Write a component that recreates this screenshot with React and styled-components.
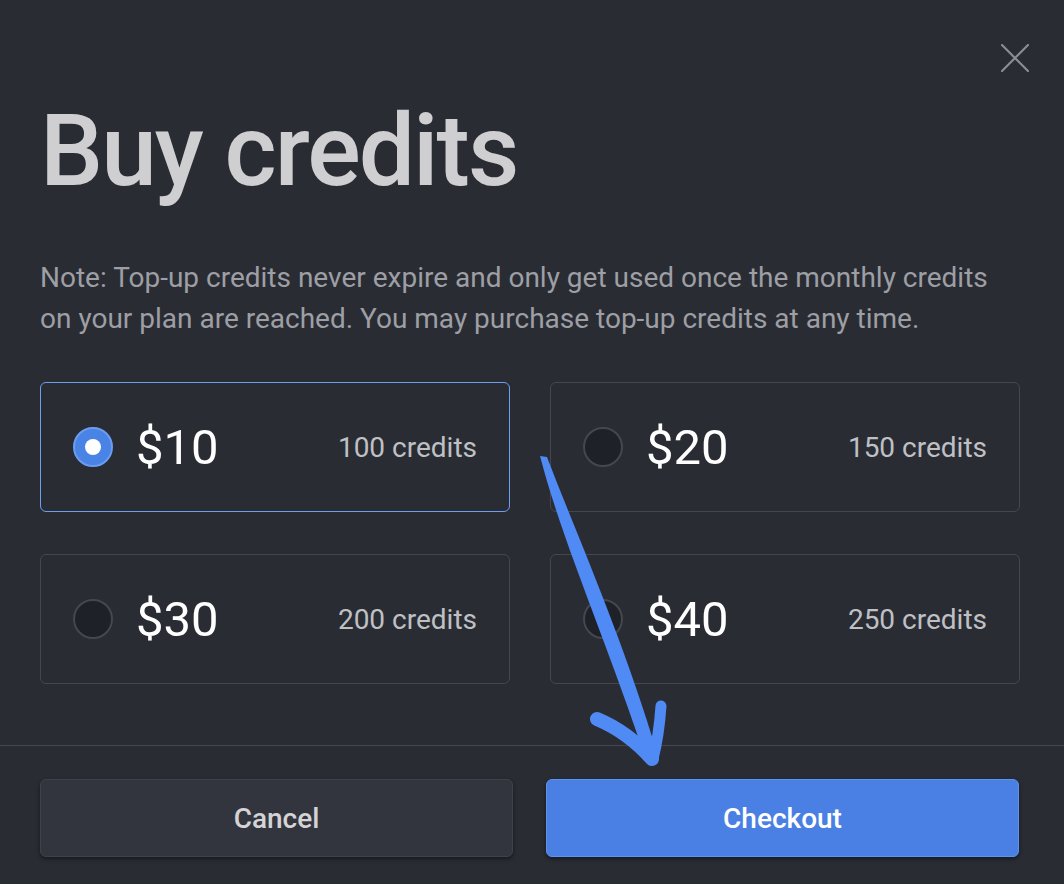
import React, { useState } from "react";
import styled, { createGlobalStyle } from "styled-components";

const GlobalStyle = createGlobalStyle`
  html, body {
    margin: 0;
    padding: 0;
    background: #2a2c34;
  }
  body {
    font-family: Roboto, "Liberation Sans", sans-serif;
  }
`;

const Dialog = styled.div`
  position: relative;
  width: 1064px;
  height: 884px;
  display: flex;
  flex-direction: column;
  background: #2a2c34;
  overflow: hidden;
`;

const CloseButton = styled.button`
  position: absolute;
  top: 44px;
  right: 35px;
  width: 28px;
  height: 28px;
  padding: 0;
  border: none;
  background: none;
  cursor: pointer;
  color: #8b8d92;
`;

const Body = styled.div`
  flex: 1;
  padding: 101px 44px 0 40px;
`;

const Title = styled.h1`
  margin: 0;
  font-size: 100px;
  line-height: 100px;
  font-weight: 500;
  letter-spacing: -2px;
  color: #cfcfd2;
`;

const Note = styled.p`
  max-width: 960px;
  margin: 56px 0 0;
  font-size: 28px;
  line-height: 41px;
  color: #9d9fa4;
`;

const Options = styled.div`
  display: grid;
  grid-template-columns: 1fr 1fr;
  column-gap: 40px;
  row-gap: 42px;
  margin-top: 43px;
`;

const Option = styled.label`
  display: flex;
  align-items: center;
  height: 130px;
  box-sizing: border-box;
  padding: 0 32px 0 32px;
  border: 1px solid ${({ $active }) => ($active ? "#6d9ef0" : "#45474e")};
  border-radius: 6px;
  cursor: pointer;
`;

const Radio = styled.span`
  width: 40px;
  height: 40px;
  box-sizing: border-box;
  border-radius: 50%;
  flex-shrink: 0;
  display: flex;
  align-items: center;
  justify-content: center;
  background: ${({ $checked }) => ($checked ? "#4a83e6" : "#1f2129")};
  border: 2px solid ${({ $checked }) => ($checked ? "#6a9df0" : "#45474e")};

  &::after {
    content: "";
    display: ${({ $checked }) => ($checked ? "block" : "none")};
    width: 16px;
    height: 16px;
    border-radius: 50%;
    background: #ffffff;
  }
`;

const Price = styled.span`
  margin-left: 23px;
  font-size: 49px;
  color: #ffffff;
`;

const Credits = styled.span`
  margin-left: auto;
  font-size: 28px;
  color: #bfc0c4;
`;

const Footer = styled.div`
  border-top: 1px solid #44464d;
  padding: 33px 45px 27px 40px;
  display: grid;
  grid-template-columns: 1fr 1fr;
  gap: 33px;
`;

const Button = styled.button`
  height: 78px;
  border-radius: 6px;
  font-family: Roboto, "Liberation Sans", sans-serif;
  font-size: 28px;
  font-weight: 500;
  cursor: pointer;
  box-shadow: 0 2px 4px rgba(0, 0, 0, 0.45);
  color: ${({ $primary }) => ($primary ? "#ffffff" : "#d4d4d6")};
  background: ${({ $primary }) => ($primary ? "#4a80e3" : "#33353e")};
  border: 1px solid ${({ $primary }) => ($primary ? "#5b93f2" : "#40424a")};
`;

const Annotation = styled.svg`
  position: absolute;
  left: 0;
  top: 0;
  pointer-events: none;
`;

const plans = [
  { price: 10, credits: 100 },
  { price: 20, credits: 150 },
  { price: 30, credits: 200 },
  { price: 40, credits: 250 },
];

export default function App() {
  const [selected, setSelected] = useState(10);

  return (
    <Dialog>
      <GlobalStyle />
      <CloseButton aria-label="Close">
        <svg width="28" height="28" viewBox="0 0 28 28">
          <path d="M1 1L27 27M27 1L1 27" stroke="currentColor" strokeWidth="2.2" strokeLinecap="round" />
        </svg>
      </CloseButton>
      <Body>
        <Title>Buy credits</Title>
        <Note>
          Note: Top-up credits never expire and only get used once the monthly credits on your plan are reached. You may purchase top-up credits at any time.
        </Note>
        <Options>
          {plans.map((p) => (
            <Option key={p.price} $active={selected === p.price} onClick={() => setSelected(p.price)}>
              <Radio $checked={selected === p.price} />
              <Price>${p.price}</Price>
              <Credits>{p.credits} credits</Credits>
            </Option>
          ))}
        </Options>
      </Body>
      <Footer>
        <Button>Cancel</Button>
        <Button $primary>Checkout</Button>
      </Footer>
      {/* hand-drawn arrow pointing at checkout */}
      <Annotation width="1064" height="884" viewBox="0 0 1064 884">
        <path
          d="M540 456 C 562 541, 607 642, 646 760 L 658 756 C 623 638, 578 538, 547 457 Z"
          fill="#4f8af5"
        />
        <path d="M597 719 Q 628 732 652 759" stroke="#4f8af5" strokeWidth="14" strokeLinecap="round" fill="none" />
        <path d="M661 706 Q 659 735 653 759" stroke="#4f8af5" strokeWidth="11" strokeLinecap="round" fill="none" />
      </Annotation>
    </Dialog>
  );
}
